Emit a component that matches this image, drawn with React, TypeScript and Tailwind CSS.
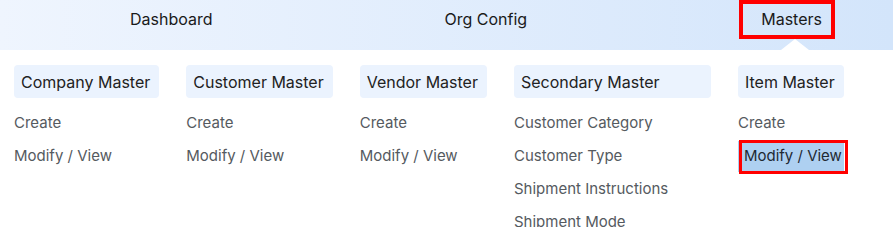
import type { ReactNode } from "react";

type MenuColumn = {
  title: string;
  items: string[];
  width?: string;
};

const columns: MenuColumn[] = [
  { title: "Company Master", items: ["Create", "Modify / View"] },
  { title: "Customer Master", items: ["Create", "Modify / View"] },
  { title: "Vendor Master", items: ["Create", "Modify / View"] },
  {
    title: "Secondary Master",
    items: ["Customer Category", "Customer Type", "Shipment Instructions", "Shipment Mode"],
    width: "w-[197px]",
  },
  { title: "Item Master", items: ["Create", "Modify / View"] },
];

function NavItem({ children, active }: { children: ReactNode; active?: boolean }) {
  if (active) {
    return (
      <div className="relative ml-[2px] flex h-[39px] w-[96px] items-center border-4 border-[#ff0000] pl-[18px] pb-[2px]">
        {children}
        {/* caret pointing into the dropdown */}
        <span className="absolute top-[35px] left-[38px] h-0 w-0 border-x-[14px] border-b-[11px] border-x-transparent border-b-white" />
      </div>
    );
  }
  return <div className="flex h-[39px] items-center px-[22px] pb-[2px]">{children}</div>;
}

export default function App() {
  return (
    <div
      className="h-[227px] w-[893px] overflow-hidden bg-white text-[#1a1a1a]"
      style={{ fontFamily: "Inter, 'Noto Sans', sans-serif" }}
    >
      {/* Top navigation */}
      <div className="flex h-[50px] items-start gap-[188px] bg-gradient-to-r from-[#eff5fe] to-[#d3e5fb] pl-[108px] text-[16px]">
        <NavItem>Dashboard</NavItem>
        <NavItem>Org Config</NavItem>
        <NavItem active>Masters</NavItem>
      </div>

      {/* Mega menu */}
      <div className="flex items-start gap-[27px] pt-[15px] pl-[14px]">
        {columns.map((col, ci) => (
          <div key={col.title} className={`flex flex-col ${col.width ?? ""}`}>
            <div className="flex h-[33px] items-center rounded-[4px] bg-[#ebf3fe] pr-[9px] pl-[7px] text-[16px] text-[#222]">
              {col.title}
            </div>
            <div className="mt-[9px] flex flex-col">
              {col.items.map((item) => {
                const selected = ci === 4 && item === "Modify / View";
                return selected ? (
                  <div key={item} className="relative mt-[1px] flex h-[31px] items-center bg-[#aed0f1] pl-[6px] text-[15px] text-[#1f2933]">
                    {item}
                    <span className="absolute top-[-1px] left-[1px] h-[34px] w-[109px] border-[3px] border-[#ff0000]" />
                  </div>
                ) : (
                  <div key={item} className="flex h-[33px] items-center text-[15px] text-[#555a60]">
                    {item}
                  </div>
                );
              })}
            </div>
          </div>
        ))}
      </div>
    </div>
  );
}
